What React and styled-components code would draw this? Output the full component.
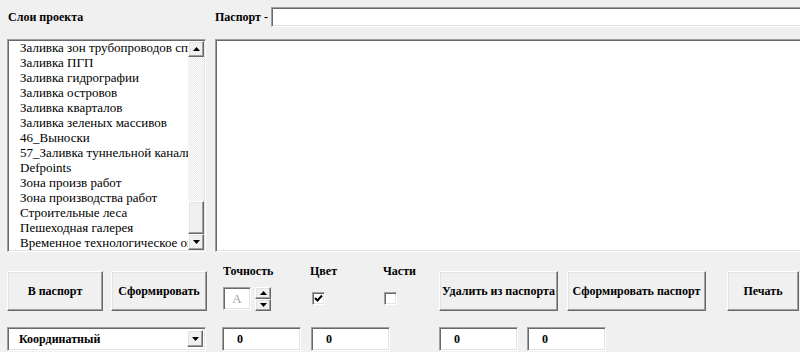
import React from 'react';
import styled, { createGlobalStyle } from 'styled-components';

const GlobalStyle = createGlobalStyle`
  html, body {
    margin: 0;
    padding: 0;
    background: #f0f0f0;
  }
`;

const Form = styled.div`
  width: 800px;
  height: 352px;
  overflow: hidden;
  background: #f0f0f0;
  padding-left: 7px;
  box-sizing: border-box;
  font-family: "Liberation Serif", "DejaVu Serif", serif;
  color: #000;
`;

const TopRow = styled.div`
  display: grid;
  grid-template-columns: 208px 1fr;
  align-items: center;
  height: 33px;
`;

const Caption = styled.div`
  font-size: 12px;
  font-weight: bold;
  line-height: 14px;
  white-space: nowrap;
  padding-left: ${p => p.$pl || 0}px;
`;

const PassportLine = styled.div`
  display: grid;
  grid-template-columns: 56px 1fr;
  align-items: center;
`;

const sunken = `
  box-sizing: border-box;
  background: #fff;
  border-top: 1px solid #a0a0a0;
  border-left: 1px solid #a0a0a0;
  border-right: 1px solid #fff;
  border-bottom: 1px solid #fff;
  box-shadow: inset 1px 1px 0 #696969, inset -1px -1px 0 #e3e3e3;
`;

const raised = `
  box-sizing: border-box;
  background: #f0f0f0;
  border-top: 1px solid #fff;
  border-left: 1px solid #fff;
  border-right: 1px solid #696969;
  border-bottom: 1px solid #696969;
  box-shadow: inset -1px -1px 0 #a0a0a0, inset 1px 1px 0 #e3e3e3;
`;

const PassportInput = styled.div`
  ${sunken}
  width: 560px;
  height: 20px;
`;

const MainRow = styled.div`
  display: grid;
  grid-template-columns: 199px 600px;
  gap: 9px;
  height: 213px;
  margin-top: 6px;
`;

const ListBox = styled.div`
  ${sunken}
  display: flex;
  padding: 1px;
  overflow: hidden;
`;

const Items = styled.div`
  flex: 1;
  overflow: hidden;
  margin-top: -1px;
  padding-left: 1px;
`;

const Item = styled.div`
  height: 15px;
  line-height: 15px;
  font-size: 13px;
  padding-left: 10px;
  white-space: nowrap;
  overflow: hidden;
`;

const ScrollBar = styled.div`
  width: 16px;
  display: flex;
  flex-direction: column;
`;

const ArrowButton = styled.div`
  ${raised}
  width: 16px;
  height: ${p => p.$h || 16}px;
  display: flex;
  align-items: center;
  justify-content: center;
  flex-shrink: 0;
`;

const Track = styled.div`
  flex: 1;
  display: flex;
  flex-direction: column;
  justify-content: flex-end;
  background-color: #fff;
  background-image: repeating-conic-gradient(#fff 0 25%, #e6e6e6 0 50%);
  background-size: 2px 2px;
`;

const Thumb = styled.div`
  ${raised}
  height: 33px;
`;

const Memo = styled.div`
  ${sunken}
  height: 213px;
`;

const ActionRow = styled.div`
  display: flex;
  align-items: flex-start;
  height: 47px;
  margin-top: 12px;
`;

const Button = styled.div`
  ${raised}
  width: ${p => p.$w}px;
  height: 40px;
  margin-top: 7px;
  margin-left: ${p => p.$ml || 0}px;
  display: flex;
  align-items: center;
  justify-content: center;
  font-size: 12px;
  font-weight: bold;
  white-space: nowrap;
  flex-shrink: 0;
`;

const Group = styled.div`
  width: ${p => p.$w}px;
  margin-left: ${p => p.$ml || 0}px;
  display: flex;
  flex-direction: column;
  align-items: flex-start;
  flex-shrink: 0;
`;

const Spin = styled.div`
  display: flex;
  gap: 4px;
  margin-top: 9px;
  margin-left: 1px;
`;

const SpinEdit = styled.div`
  ${sunken}
  width: 28px;
  height: 23px;
  display: flex;
  align-items: center;
  justify-content: center;
  font-size: 13px;
  color: #a0a0a0;
`;

const SpinButtons = styled.div`
  display: flex;
  flex-direction: column;
`;

const Check = styled.div`
  ${sunken}
  width: 13px;
  height: 13px;
  margin-top: 14px;
  margin-left: ${p => p.$ml || 0}px;
  display: flex;
  align-items: center;
  justify-content: center;
`;

const FieldRow = styled.div`
  display: flex;
  margin-top: 16px;
`;

const Combo = styled.div`
  ${sunken}
  width: 199px;
  height: 24px;
  display: flex;
  align-items: flex-start;
  justify-content: space-between;
  padding: 2px;
`;

const ComboText = styled.span`
  font-size: 12px;
  font-weight: bold;
  line-height: 18px;
  padding-left: 9px;
`;

const Edit = styled.div`
  ${sunken}
  width: 79px;
  height: 24px;
  margin-left: ${p => p.$ml || 0}px;
  padding-left: 14px;
  font-size: 12px;
  font-weight: bold;
  line-height: 22px;
`;

const Tri = ({ up }) => (
  <svg width="7" height="4" viewBox="0 0 7 4">
    <polygon points={up ? '3.5,0 7,4 0,4' : '0,0 7,0 3.5,4'} fill="#000" />
  </svg>
);

const layers = [
  'Заливка зон трубопроводов спутников',
  'Заливка ПГП',
  'Заливка гидрографии',
  'Заливка островов',
  'Заливка кварталов',
  'Заливка зеленых массивов',
  '46_Выноски',
  '57_Заливка туннельной канализации',
  'Defpoints',
  'Зона произв работ',
  'Зона производства работ',
  'Строительные леса',
  'Пешеходная галерея',
  'Временное технологическое ограждение',
];

export default function App() {
  return (
    <>
      <GlobalStyle />
      <Form>
        <TopRow>
          <Caption $pl={1}>Слои проекта</Caption>
          <PassportLine>
            <Caption>Паспорт -</Caption>
            <PassportInput />
          </PassportLine>
        </TopRow>

        <MainRow>
          <ListBox>
            <Items>
              {layers.map(name => (
                <Item key={name}>{name}</Item>
              ))}
            </Items>
            <ScrollBar>
              <ArrowButton><Tri up /></ArrowButton>
              <Track>
                <Thumb />
              </Track>
              <ArrowButton><Tri /></ArrowButton>
            </ScrollBar>
          </ListBox>
          <Memo />
        </MainRow>

        <ActionRow>
          <Button $w={96}>В паспорт</Button>
          <Button $w={96} $ml={8}>Сформировать</Button>
          <Group $w={88} $ml={15}>
            <Caption $pl={1}>Точность</Caption>
            <Spin>
              <SpinEdit>A</SpinEdit>
              <SpinButtons>
                <ArrowButton $h={12}><Tri up /></ArrowButton>
                <ArrowButton $h={12}><Tri /></ArrowButton>
              </SpinButtons>
            </Spin>
          </Group>
          <Group $w={73}>
            <Caption>Цвет</Caption>
            <Check $ml={2}>
              <svg width="9" height="9" viewBox="0 0 9 9">
                <polyline points="1,4 3.5,6.5 8,1.5" fill="none" stroke="#000" strokeWidth="2" />
              </svg>
            </Check>
          </Group>
          <Group $w={56}>
            <Caption>Части</Caption>
            <Check $ml={1} />
          </Group>
          <Button $w={119}>Удалить из паспорта</Button>
          <Button $w={139} $ml={9}>Сформировать паспорт</Button>
          <Button $w={72} $ml={21}>Печать</Button>
        </ActionRow>

        <FieldRow>
          <Combo>
            <ComboText>Координатный</ComboText>
            <ArrowButton $h={17}><Tri /></ArrowButton>
          </Combo>
          <Edit $ml={16}>0</Edit>
          <Edit $ml={10}>0</Edit>
          <Edit $ml={49}>0</Edit>
          <Edit $ml={9}>0</Edit>
        </FieldRow>
      </Form>
    </>
  );
}
